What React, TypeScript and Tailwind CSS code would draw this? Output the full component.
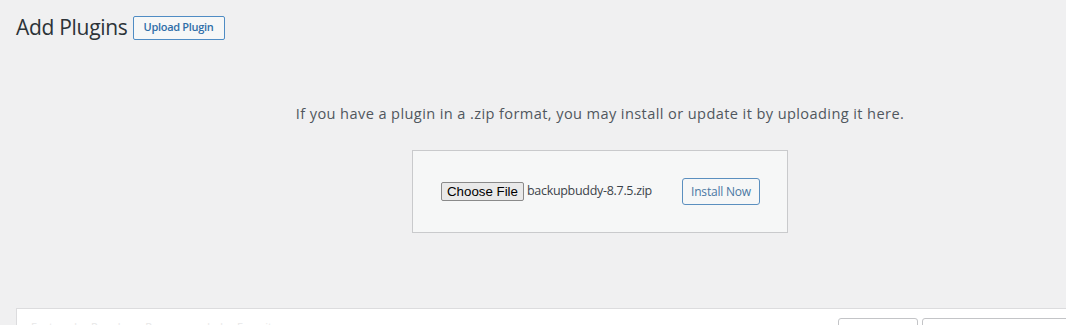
import React from "react";

export default function App() {
  const sans = { fontFamily: '"Open Sans", "Noto Sans", Arial, sans-serif' };
  return (
    <div
      className="w-[1066px] h-[325px] overflow-hidden bg-[#f0f0f1] text-[#3c434a]"
      style={sans}
    >
      <div className="w-[1168px] ml-4">
        {/* Header */}
        <div className="flex items-center h-[56px] pb-[1px]">
          <h1 className="text-[21px] leading-none font-normal text-[#2c3338] tracking-[-0.3px]">
            Add Plugins
          </h1>
          <button className="ml-[5px] h-[24px] w-[92px] rounded-[2px] border border-[#4f8cc4] bg-[#f6f7f7] text-[11px] font-semibold text-[#2f6ea8] tracking-[-0.3px]">
            Upload Plugin
          </button>
        </div>

        {/* Upload area */}
        <div className="flex flex-col items-center">
          <p className="mt-[48px] text-[14.6px] leading-[18px] text-[#50575e] tracking-[0.39px]">
            If you have a plugin in a .zip format, you may install or update it by uploading it here.
          </p>
          <div className="mt-[28px] w-[376px] h-[83px] border border-[#c9cacc] bg-[#f6f7f7] flex items-center pl-[28px] pr-[27px]">
            <div className="flex items-center">
              <span
                className="h-[19px] px-[5px] flex items-center border border-[#8a8a8a] bg-[#e9e9e9] rounded-[2px] text-[13.3px] text-black"
                style={{ fontFamily: '"Liberation Sans", Arial, sans-serif' }}
              >
                Choose File
              </span>
              <span className="ml-[3px] text-[12.5px] text-[#3c434a] tracking-[-0.3px]">
                backupbuddy-8.7.5.zip
              </span>
            </div>
            <button className="ml-auto h-[27px] w-[78px] rounded-[3px] border border-[#5b8fbf] bg-[#f6f7f7] text-[12px] text-[#4a77a3] tracking-[-0.2px]">
              Install Now
            </button>
          </div>
        </div>

        {/* Bottom panel */}
        <div className="mt-[75px] h-[40px] border border-[#dcdcde] bg-white flex items-start pt-[9px] pl-[14px]">
          <div className="w-[807px] shrink-0 flex gap-[14px] pt-[2px] text-[11px] leading-[14px] text-[#e8e8e8]">
            <span>Featured</span>
            <span>Popular</span>
            <span>Recommended</span>
            <span>Favorites</span>
          </div>
          <div className="flex gap-[4px]">
            <span className="block w-[80px] h-[30px] border border-[#c3c4c7] rounded-[3px] bg-white" />
            <span className="block w-[240px] h-[30px] border border-[#c3c4c7] rounded-[3px] bg-white" />
          </div>
        </div>
      </div>
    </div>
  );
}
